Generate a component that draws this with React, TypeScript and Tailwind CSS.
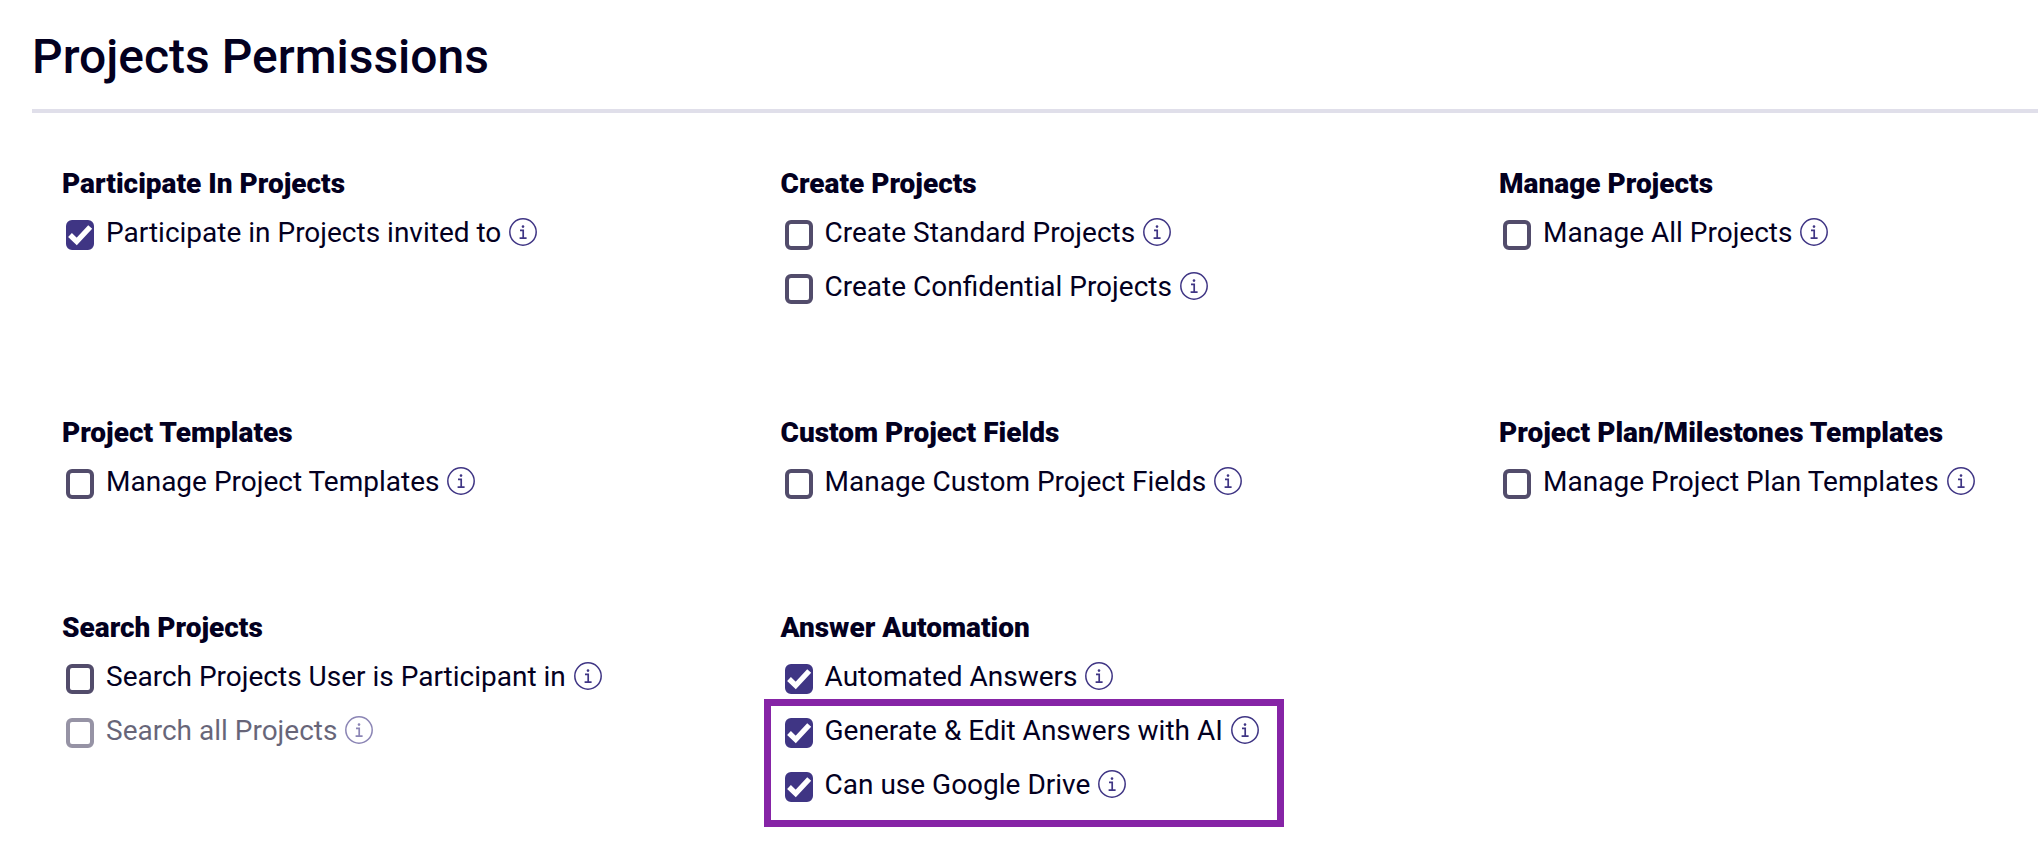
import { useId, useState } from 'react'
import clsx from 'clsx'

type Permission = {
  label: string
  checked?: boolean
  disabled?: boolean
}

type Group = {
  title: string
  items: Permission[]
  highlighted?: Permission[]
}

const groups: Group[] = [
  {
    title: 'Participate In Projects',
    items: [{ label: 'Participate in Projects invited to', checked: true }],
  },
  {
    title: 'Create Projects',
    items: [{ label: 'Create Standard Projects' }, { label: 'Create Confidential Projects' }],
  },
  { title: 'Manage Projects', items: [{ label: 'Manage All Projects' }] },
  { title: 'Project Templates', items: [{ label: 'Manage Project Templates' }] },
  { title: 'Custom Project Fields', items: [{ label: 'Manage Custom Project Fields' }] },
  {
    title: 'Project Plan/Milestones Templates',
    items: [{ label: 'Manage Project Plan Templates' }],
  },
  {
    title: 'Search Projects',
    items: [
      { label: 'Search Projects User is Participant in' },
      { label: 'Search all Projects', disabled: true },
    ],
  },
  {
    title: 'Answer Automation',
    items: [{ label: 'Automated Answers', checked: true }],
    highlighted: [
      { label: 'Generate & Edit Answers with AI', checked: true },
      { label: 'Can use Google Drive', checked: true },
    ],
  },
]

function InfoIcon() {
  return (
    <svg viewBox="0 0 28 28" className="size-7" fill="none" stroke="currentColor" aria-hidden="true">
      <circle cx="14" cy="14" r="13.2" strokeWidth="1.5" />
      <circle cx="14" cy="8.6" r="1.3" fill="currentColor" stroke="none" />
      <path d="M11 12.3h3.2v7.9M10.6 20.2h7" strokeWidth="1.7" />
    </svg>
  )
}

function PermissionRow({ label, checked = false, disabled }: Permission) {
  const id = useId()
  const [on, setOn] = useState(checked)

  return (
    <div className="flex items-start">
      <div className={clsx('relative mt-1.5 ml-1 h-[30px] w-7', disabled && 'opacity-60')}>
        <input
          id={id}
          type="checkbox"
          checked={on}
          disabled={disabled}
          onChange={(e) => setOn(e.target.checked)}
          className="block h-full w-full appearance-none rounded-md border-4 border-[#524c6b] bg-white checked:border-[#3f3584] checked:bg-[#3f3584]"
        />
        {on && (
          <svg
            viewBox="0 0 28 30"
            className="pointer-events-none absolute inset-0"
            fill="none"
            stroke="white"
            strokeWidth="5.4"
            aria-hidden="true"
          >
            <path d="M4 15l6.7 6.5L24.2 7" />
          </svg>
        )}
      </div>
      <label
        htmlFor={id}
        className={clsx('ml-3 text-[28px] leading-[38px]', disabled && 'opacity-60')}
      >
        {label}
      </label>
      <button
        type="button"
        aria-label={`About ${label}`}
        className={clsx('mt-1 ml-2 text-[#3f3584]', disabled && 'opacity-60')}
      >
        <InfoIcon />
      </button>
    </div>
  )
}

function PermissionGroup({ title, items, highlighted }: Group) {
  return (
    <section>
      <h2 className="mb-3 text-[28px] leading-9 font-black">{title}</h2>
      <div className="flex flex-col items-start gap-4">
        {items.map((item) => (
          <PermissionRow key={item.label} {...item} />
        ))}
        {highlighted && (
          <div className="relative flex flex-col gap-4">
            {highlighted.map((item) => (
              <PermissionRow key={item.label} {...item} />
            ))}
            {/* Callout frame around the AI options */}
            <div className="pointer-events-none absolute -top-[13px] -right-[25px] -bottom-[23px] -left-[17px] border-[7px] border-[#8624a6]" />
          </div>
        )}
      </div>
    </section>
  )
}

export default function App() {
  return (
    <main className="min-h-screen bg-white pt-[29px] pb-6 pl-8 font-[Roboto,sans-serif] text-[#03001f]">
      <h1 className="border-b-4 border-[#e0dfea] pb-6 text-5xl leading-14 font-medium">
        Projects Permissions
      </h1>
      <div className="mt-[53px] grid grid-cols-[4fr_4fr_3fr] gap-y-[109px] pl-[30px]">
        {groups.map((group) => (
          <PermissionGroup key={group.title} {...group} />
        ))}
      </div>
    </main>
  )
}
